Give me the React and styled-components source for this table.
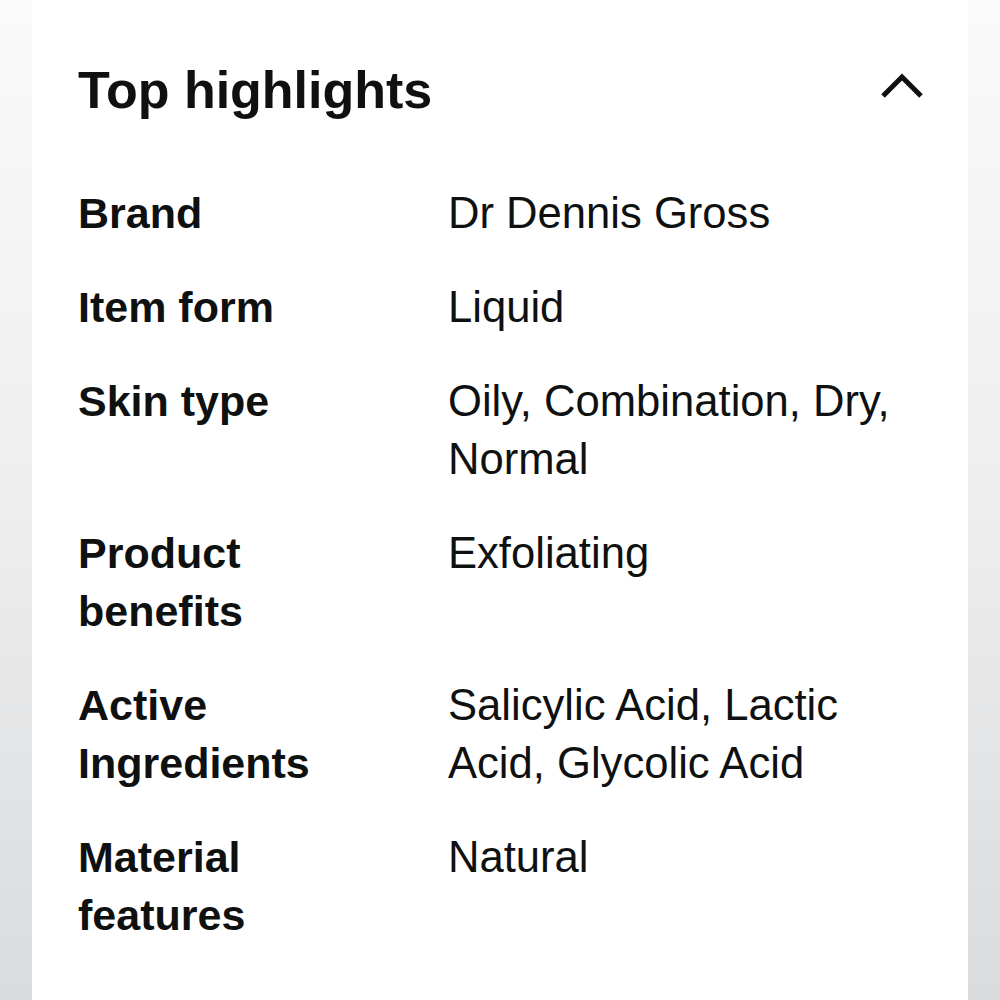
import React from "react";
import styled, { createGlobalStyle } from "styled-components";

const GlobalStyle = createGlobalStyle`
  html, body {
    margin: 0;
    padding: 0;
  }
  body {
    font-family: "Liberation Sans", Arial, sans-serif;
    color: #0f1111;
    background: linear-gradient(to bottom, #fafafa 0%, #eeeeef 50%, #d9dbdc 100%);
    min-height: 1000px;
  }
`;

const Page = styled.div`
  display: flex;
  justify-content: center;
  padding: 0 32px;
  min-height: 1000px;
`;

const Card = styled.section`
  width: 100%;
  background: #fff;
  padding: 60px 45px 0 46px;
  box-sizing: border-box;
  min-height: 1000px;
`;

const Header = styled.div`
  display: flex;
  align-items: center;
  justify-content: space-between;
  height: 60px;
  margin-bottom: 64px;
`;

const Title = styled.h2`
  margin: 0;
  font-size: 52px;
  font-weight: 700;
  line-height: 60px;
`;

const Toggle = styled.button`
  border: 0;
  background: none;
  padding: 0;
  display: flex;
  cursor: pointer;
  margin-top: -8px;
`;

const Table = styled.dl`
  display: grid;
  grid-template-columns: 370px 1fr;
  row-gap: 36px;
  margin: 0;
`;

const Label = styled.dt`
  font-size: 43px;
  font-weight: 700;
  line-height: 58px;
`;

const Value = styled.dd`
  margin: 0;
  font-size: 43.6px;
  line-height: 58px;
`;

const rows = [
  ["Brand", "Dr Dennis Gross"],
  ["Item form", "Liquid"],
  ["Skin type", <>Oily, Combination, Dry,<br />Normal</>],
  [<>Product<br />benefits</>, "Exfoliating"],
  [<>Active<br />Ingredients</>, <>Salicylic Acid, Lactic<br />Acid, Glycolic Acid</>],
  [<>Material<br />features</>, "Natural"],
];

const ChevronUp = () => (
  <svg width="42" height="28" viewBox="0 0 42 28" fill="none">
    <polyline
      points="2,24 21,5 40,24"
      stroke="#0f1111"
      strokeWidth="5"
      strokeLinecap="butt"
      strokeLinejoin="miter"
    />
  </svg>
);

export default function App() {
  return (
    <>
      <GlobalStyle />
      <Page>
        <Card>
          <Header>
            <Title>Top highlights</Title>
            <Toggle aria-label="Collapse">
              <ChevronUp />
            </Toggle>
          </Header>
          <Table>
            {rows.map(([label, value], i) => (
              <React.Fragment key={i}>
                <Label>{label}</Label>
                <Value>{value}</Value>
              </React.Fragment>
            ))}
          </Table>
        </Card>
      </Page>
    </>
  );
}
